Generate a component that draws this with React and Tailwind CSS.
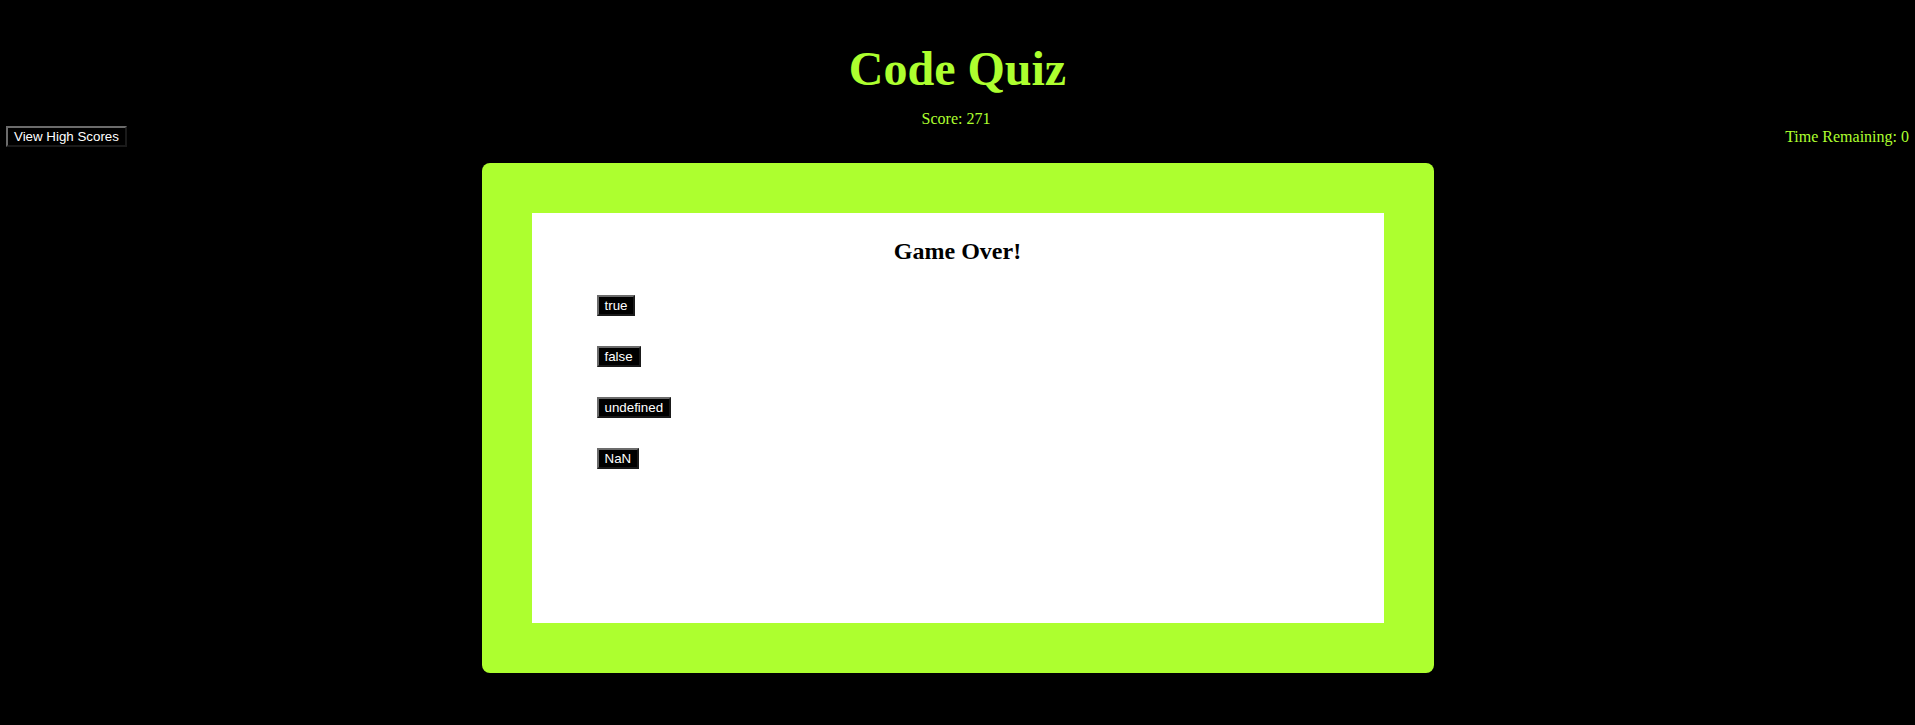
const answers = ["true", "false", "undefined", "NaN"];

function QuizButton({ children, className = "" }) {
  return (
    <button
      className={`block bg-black text-white font-['Liberation_Sans',Arial,sans-serif] text-[13.33px] leading-[15px] px-[6px] py-[1px] border-2 border-t-[#6b6b6b] border-l-[#6b6b6b] border-b-[#1a1a1a] border-r-[#1a1a1a] ${className}`}
    >
      {children}
    </button>
  );
}

export default function App() {
  return (
    <div className="min-h-[725px] bg-black font-['Liberation_Serif','Times_New_Roman',serif] text-[#adff2f]">
      <h1 className="pt-[45px] text-center text-[48px] leading-[48px] font-bold">Code Quiz</h1>

      <div className="mt-[17px] flex items-start justify-between px-[6px]">
        <QuizButton className="mt-[16px]">View High Scores</QuizButton>
        <p className="text-[16px] leading-[18px]">Score: 271</p>
        <p className="mt-[18px] text-[16px] leading-[18px]">Time Remaining: 0</p>
      </div>

      <div className="mx-auto mt-[16px] w-[952px] h-[510px] rounded-lg bg-[#adff2f] p-[50px]">
        <div className="h-full bg-white pt-[24px]">
          <h2 className="text-center text-[24px] leading-[28px] font-bold text-black">Game Over!</h2>
          <ul className="mt-[30px] flex flex-col items-start gap-[30px] pl-[65px]">
            {answers.map((a) => (
              <li key={a}>
                <QuizButton>{a}</QuizButton>
              </li>
            ))}
          </ul>
        </div>
      </div>
    </div>
  );
}
